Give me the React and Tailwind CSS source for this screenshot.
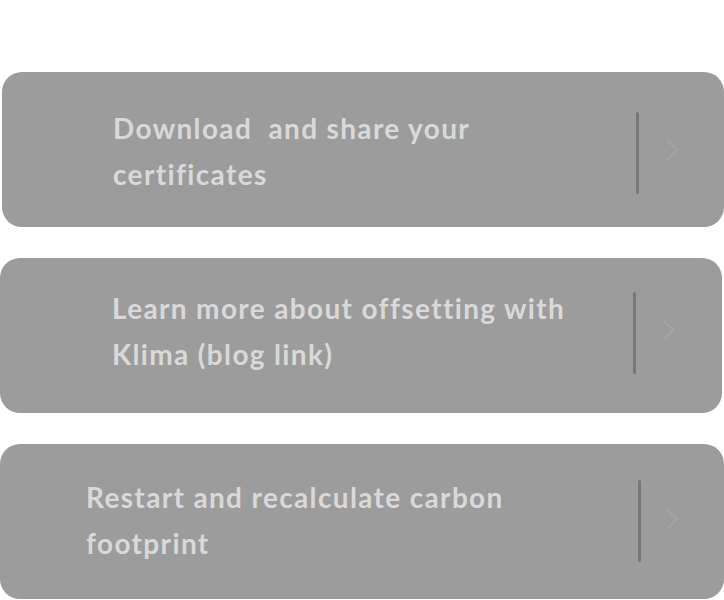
import React from 'react'

const items = [
  { id: 1, title: 'Download\u00a0 and share your certificates', card: 'ml-[2px] w-[722px]', text: 'ml-[111px] mt-[12px]', line: 'left-[634px] top-[40px]', chev: 'left-[664px] top-[67px]' },
  { id: 2, title: 'Learn more about offsetting with Klima (blog link)', card: 'ml-0 w-[722px]', text: 'ml-[112px] mt-0', line: 'left-[633px] top-[34px]', chev: 'left-[662px] top-[61px]' },
  { id: 3, title: 'Restart and recalculate carbon footprint', card: 'ml-0 w-[724px]', text: 'ml-[86px] mt-[6px]', line: 'left-[638px] top-[36px]', chev: 'left-[666px] top-[64px]' },
]

const Chevron = () => (
  <svg width="14" height="22" viewBox="0 0 14 22" fill="none">
    <path d="M2 2 L11 11 L2 20" stroke="#a5a5a5" strokeWidth="2" strokeLinecap="round" strokeLinejoin="round" />
  </svg>
)

const App = () => {
  return (
    <div className="min-h-screen bg-white pt-[72px] flex flex-col gap-[31px] overflow-hidden" style={{ fontFamily: 'Lato, "Open Sans", sans-serif' }}>
      {items.map((item) => (
        <div key={item.id} className={`${item.card} relative h-[155px] bg-[#9c9c9c] rounded-[20px] flex items-center pb-[10px]`}>
          <p className={`${item.text} w-[485px] text-[28px] leading-[46px] font-bold text-[#d9d9d9] tracking-[1.35px]`}>
            {item.title}
          </p>
          <div className={`absolute ${item.line} w-[3px] h-[82px] rounded-full bg-[#777777]`} />
          <div className={`absolute ${item.chev}`}>
            <Chevron />
          </div>
        </div>
      ))}
    </div>
  )
}

export default App
